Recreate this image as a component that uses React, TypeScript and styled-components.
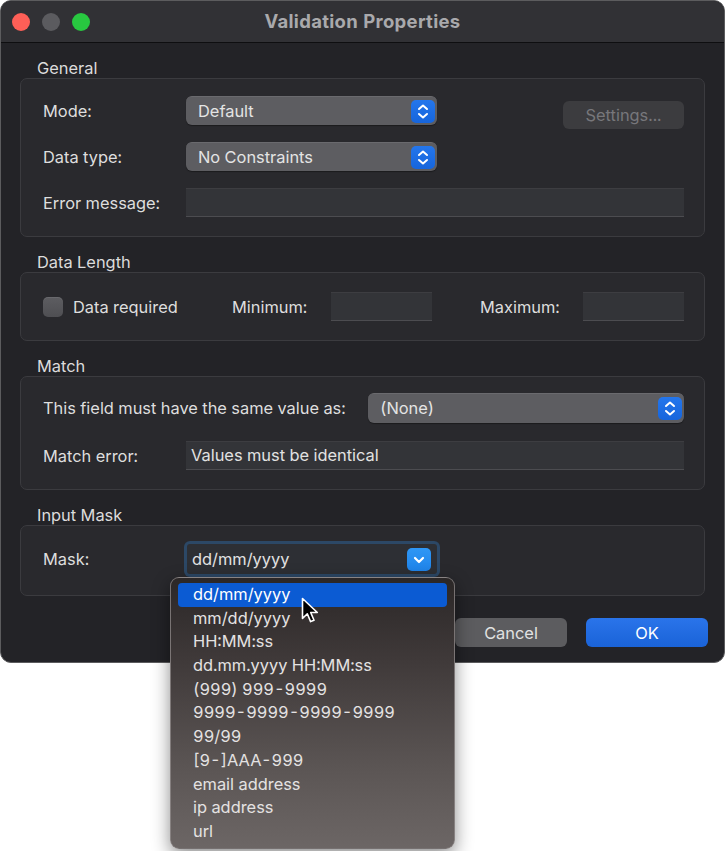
import React from 'react'
import styled, { createGlobalStyle } from 'styled-components'

const GlobalStyle = createGlobalStyle`
  html, body {
    margin: 0;
    padding: 0;
    background: #ffffff;
  }
  body {
    font-family: Inter, 'Liberation Sans', sans-serif;
    font-variant-numeric: tabular-nums;
    -webkit-font-smoothing: antialiased;
  }
`

const maskOptions = [
  'dd/mm/yyyy',
  'mm/dd/yyyy',
  'HH:MM:ss',
  'dd.mm.yyyy HH:MM:ss',
  '(999) 999-9999',
  '9999-9999-9999-9999',
  '99/99',
  '[9-]AAA-999',
  'email address',
  'ip address',
  'url',
]

// 上下矢印（ポップアップボタン）
const StepperIcon = () => (
  <svg width="24" height="23" viewBox="0 0 24 23">
    <path d="M8 9 L12 5.5 L16 9" fill="none" stroke="#fff" strokeWidth="2" strokeLinecap="round" strokeLinejoin="round" />
    <path d="M8 14 L12 17.5 L16 14" fill="none" stroke="#fff" strokeWidth="2" strokeLinecap="round" strokeLinejoin="round" />
  </svg>
)

const ChevronDown = () => (
  <svg width="24" height="23" viewBox="0 0 24 23">
    <path d="M8 10 L12 14 L16 10" fill="none" stroke="#fff" strokeWidth="2.2" strokeLinecap="round" strokeLinejoin="round" />
  </svg>
)

const Cursor = () => (
  <svg width="19" height="27" viewBox="0 0 19 27">
    <path
      d="M1.5 1.5 L1.5 21.5 L6.3 16.8 L9.6 24.6 L13 23.2 L9.7 15.5 L16.3 15.5 Z"
      fill="#000"
      stroke="#fff"
      strokeWidth="1.6"
      strokeLinejoin="round"
    />
  </svg>
)

function App(): JSX.Element {
  return (
    <Page>
      <GlobalStyle />
      <Window>
        <TitleBar>
          <Lights>
            <Light color="#fe5f57" />
            <Light color="#5b5b5f" />
            <Light color="#28c840" />
          </Lights>
          <Title>Validation Properties</Title>
          <div />
        </TitleBar>

        <Body>
          <Group>
            <GroupLabel>General</GroupLabel>
            <GroupBox pad="17px 20px 19px 22px" gap={17}>
              <Row>
                <RowLabel>Mode:</RowLabel>
                <Popup width={251}>
                  <PopupText>Default</PopupText>
                  <Stepper>
                    <StepperIcon />
                  </Stepper>
                </Popup>
                <Spacer />
                <SettingsButton>Settings...</SettingsButton>
              </Row>
              <Row>
                <RowLabel>Data type:</RowLabel>
                <Popup width={251}>
                  <PopupText>No Constraints</PopupText>
                  <Stepper>
                    <StepperIcon />
                  </Stepper>
                </Popup>
              </Row>
              <Row>
                <RowLabel>Error message:</RowLabel>
                <Field />
              </Row>
            </GroupBox>
          </Group>

          <Group>
            <GroupLabel>Data Length</GroupLabel>
            <GroupBox pad="19px 20px 19px 22px" gap={0}>
              <Row>
                <CheckGroup>
                  <Checkbox />
                  <span>Data required</span>
                </CheckGroup>
                <FixedLabel width={99}>Minimum:</FixedLabel>
                <Field width={101} />
                <Spacer width={48} />
                <FixedLabel width={103}>Maximum:</FixedLabel>
                <Field width={101} />
              </Row>
            </GroupBox>
          </Group>

          <Group>
            <GroupLabel>Match</GroupLabel>
            <GroupBox pad="16px 20px 19px 22px" gap={18}>
              <Row>
                <Spacer>This field must have the same value as:</Spacer>
                <Popup width={316} tall>
                  <PopupText>(None)</PopupText>
                  <Stepper>
                    <StepperIcon />
                  </Stepper>
                </Popup>
              </Row>
              <Row>
                <RowLabel>Match error:</RowLabel>
                <Field>Values must be identical</Field>
              </Row>
            </GroupBox>
          </Group>

          <Group>
            <GroupLabel>Input Mask</GroupLabel>
            <GroupBox pad="18px 20px 21px 22px" gap={0}>
              <Row>
                <RowLabel>Mask:</RowLabel>
                <Combo>
                  <ComboText>dd/mm/yyyy</ComboText>
                  <ComboButton>
                    <ChevronDown />
                  </ComboButton>
                </Combo>
              </Row>
            </GroupBox>
          </Group>
        </Body>

        <Footer>
          <PushButton>Cancel</PushButton>
          <PushButton primary>OK</PushButton>
        </Footer>
      </Window>

      <Menu>
        {maskOptions.map((option, i) => (
          <MenuItem key={option} selected={i === 0}>
            {option}
          </MenuItem>
        ))}
      </Menu>

      <CursorWrap>
        <Cursor />
      </CursorWrap>
    </Page>
  )
}

const Page = styled.div`
  position: relative;
  width: 725px;
  height: 851px;
  overflow: hidden;
`

const Window = styled.div`
  box-sizing: border-box;
  width: 725px;
  height: 663px;
  border: 1px solid #5c5c5e;
  border-radius: 11px;
  background: #232327;
  overflow: hidden;
  display: flex;
  flex-direction: column;
`

const TitleBar = styled.div`
  height: 41px;
  flex-shrink: 0;
  background: #313135;
  border-bottom: 1px solid #0e0e10;
  display: grid;
  grid-template-columns: 1fr auto 1fr;
  align-items: center;
`

const Lights = styled.div`
  display: flex;
  gap: 12px;
  padding-left: 11px;
`

const Light = styled.span<{ color: string }>`
  width: 18px;
  height: 18px;
  border-radius: 50%;
  background: ${(p) => p.color};
`

const Title = styled.div`
  font-size: 18.5px;
  font-weight: 700;
  color: #a9a9ac;
  letter-spacing: 0.3px;
  margin-top: -1px;
`

const Body = styled.div`
  display: flex;
  flex-direction: column;
  gap: 15px;
  padding: 15px 19px 0 19px;
`

const Group = styled.div`
  display: flex;
  flex-direction: column;
`

const GroupLabel = styled.div`
  font-size: 16.4px;
  line-height: 20px;
  color: #dcdcdc;
  padding-left: 17px;
`

const GroupBox = styled.div<{ pad: string; gap: number }>`
  display: flex;
  flex-direction: column;
  gap: ${(p) => p.gap}px;
  padding: ${(p) => p.pad};
  background: #29292d;
  border: 1px solid #3b3b3f;
  border-radius: 7px;
`

const Row = styled.div`
  display: flex;
  align-items: center;
  font-size: 16.4px;
  color: #dedede;
  min-height: 29px;
`

const RowLabel = styled.div`
  width: 143px;
  flex-shrink: 0;
  white-space: nowrap;
`

const FixedLabel = styled.div<{ width: number }>`
  width: ${(p) => p.width}px;
  flex-shrink: 0;
  white-space: nowrap;
`

const Spacer = styled.div<{ width?: number }>`
  ${(p) => (p.width ? `width: ${p.width}px; flex-shrink: 0;` : 'flex: 1;')}
  white-space: nowrap;
`

const Popup = styled.div<{ width: number; tall?: boolean }>`
  box-sizing: border-box;
  width: ${(p) => p.width}px;
  height: ${(p) => (p.tall ? 30 : 29)}px;
  display: flex;
  align-items: center;
  padding: 0 2px 0 12px;
  background: #5d5d61;
  border-top: 1px solid #6a6a6e;
  border-radius: 6px;
  box-shadow: 0 1px 1px rgba(0, 0, 0, 0.35);
  color: #e4e4e4;
  flex-shrink: 0;
`

const PopupText = styled.span`
  flex: 1;
  margin-top: -1px;
`

const Stepper = styled.div`
  width: 24px;
  height: 23px;
  border-radius: 5px;
  background: linear-gradient(#2476ec, #1665dc);
  display: flex;
`

const SettingsButton = styled.div`
  box-sizing: border-box;
  width: 121px;
  height: 28px;
  display: flex;
  align-items: center;
  justify-content: center;
  border-radius: 6px;
  background: #3c3c3f;
  color: #77777b;
  font-size: 16.4px;
  margin: 4px 0 -4px;
`

const Field = styled.div<{ width?: number }>`
  box-sizing: border-box;
  ${(p) => (p.width ? `width: ${p.width}px; flex-shrink: 0;` : 'flex: 1;')}
  height: 29px;
  display: flex;
  align-items: center;
  padding: 0 0 1px 5px;
  background: #333438;
  border-top: 1px solid #3d3d41;
  border-bottom: 1px solid #4c4c50;
  color: #e2e2e2;
`

const CheckGroup = styled.div`
  width: 189px;
  flex-shrink: 0;
  display: flex;
  align-items: center;
  gap: 10px;
`

const Checkbox = styled.span`
  width: 20px;
  height: 20px;
  border-radius: 5px;
  background: linear-gradient(#5d5d61, #4f4f53);
  box-shadow: inset 0 1px 0 rgba(255, 255, 255, 0.08);
`

const Combo = styled.div`
  box-sizing: border-box;
  width: 250px;
  height: 30px;
  margin-left: 1px;
  display: flex;
  align-items: center;
  padding: 0 6px 0 5px;
  background: #2d2f34;
  border-radius: 3px;
  box-shadow: 0 0 0 3px rgba(48, 98, 150, 0.55);
`

const ComboText = styled.span`
  flex: 1;
  color: #e2e2e2;
`

const ComboButton = styled.div`
  width: 24px;
  height: 23px;
  border-radius: 5px;
  background: linear-gradient(#2f97f5, #1f84ea);
  display: flex;
`

const Footer = styled.div`
  display: flex;
  justify-content: flex-end;
  gap: 19px;
  padding: 22px 16px 0 0;
`

const PushButton = styled.div<{ primary?: boolean }>`
  box-sizing: border-box;
  width: ${(p) => (p.primary ? 122 : 112)}px;
  height: 29px;
  display: flex;
  align-items: center;
  justify-content: center;
  border-radius: 6px;
  font-size: 16.4px;
  color: ${(p) => (p.primary ? '#ffffff' : '#e2e2e2')};
  background: ${(p) => (p.primary ? 'linear-gradient(#2a74ea, #1a63d8)' : '#5c5c5f')};
`

const Menu = styled.div`
  position: absolute;
  left: 170px;
  top: 577px;
  box-sizing: border-box;
  width: 285px;
  height: 272px;
  padding: 5px 7px 4px;
  border-radius: 9px;
  border: 1px solid rgba(150, 144, 144, 0.7);
  background: linear-gradient(180deg, #2b2727 0%, #3f3939 30%, #5b5554 70%, #6c6665 100%);
  box-shadow: 0 6px 18px rgba(0, 0, 0, 0.45);
`

const MenuItem = styled.div<{ selected?: boolean }>`
  height: 23.7px;
  line-height: 23.7px;
  padding-left: 15px;
  border-radius: 4px;
  font-size: 16.4px;
  color: ${(p) => (p.selected ? '#ffffff' : '#e4e2e2')};
  background: ${(p) => (p.selected ? '#0b5bd3' : 'transparent')};
  white-space: nowrap;
`

const CursorWrap = styled.div`
  position: absolute;
  left: 301px;
  top: 597px;
  display: flex;
`

export default App
